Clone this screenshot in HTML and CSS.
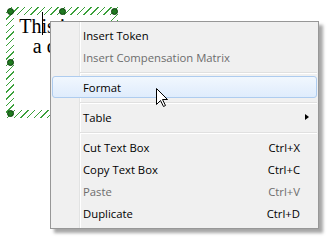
FILE: index.html
```html
<!DOCTYPE html>
<html>
<head>
<meta charset="utf-8">
<link rel="stylesheet" href="styles.css">
</head>
<body>
<div class="canvas">
  <div class="frame">
    <div class="textbox">
      <div class="line">Th<span class="caret"></span>is is our</div>
      <div class="line">a demo</div>
    </div>
    <span class="handle h-tl"></span>
    <span class="handle h-tm"></span>
    <span class="handle h-tr"></span>
    <span class="handle h-ml"></span>
    <span class="handle h-bl"></span>
  </div>

  <div class="menu">
    <div class="item">Insert Token</div>
    <div class="item disabled">Insert Compensation Matrix</div>
    <div class="sep"></div>
    <div class="item hover">Format</div>
    <div class="sep"></div>
    <div class="item">Table<span class="arrow"></span></div>
    <div class="sep"></div>
    <div class="item">Cut Text Box<span class="key">Ctrl+X</span></div>
    <div class="item">Copy Text Box<span class="key">Ctrl+C</span></div>
    <div class="item disabled">Paste<span class="key">Ctrl+V</span></div>
    <div class="item">Duplicate<span class="key">Ctrl+D</span></div>
  </div>

  <svg class="pointer" width="13" height="20" viewBox="0 0 13 20">
    <path d="M0.5 0.5 L0.5 16.5 L4.5 12.5 L7.5 18.5 L9.5 17.5 L6.5 11.5 L11.5 11.5 Z" fill="#fff" stroke="#000" stroke-width="1" stroke-linejoin="miter"/>
  </svg>
</div>
</body>
</html>
```

FILE: styles.css
```css
html, body {
  margin: 0;
  padding: 0;
  background: #fff;
}

.canvas {
  position: relative;
  width: 333px;
  height: 240px;
  overflow: hidden;
  background: #fff;
}

.frame {
  position: absolute;
  left: 6px;
  top: 7px;
  width: 112px;
  height: 111px;
  box-sizing: border-box;
  padding: 8px;
  background: repeating-linear-gradient(135deg, #fff 0 3.7px, #3aa03a 3.7px 4.7px);
}

.textbox {
  width: 100%;
  height: 100%;
  box-sizing: border-box;
  padding-top: 1px;
  background: #fff;
  font-family: "Liberation Serif", serif;
  font-size: 20px;
  line-height: 20px;
  text-align: center;
  color: #000;
}

.line {
  white-space: nowrap;
}

.caret {
  position: relative;
  display: inline-block;
  width: 0;
  height: 0;
}

.caret::after {
  content: "";
  position: absolute;
  left: 1px;
  top: -21px;
  width: 1px;
  height: 23px;
  background: #000;
}

.handle {
  position: absolute;
  width: 7px;
  height: 7px;
  box-sizing: border-box;
  border-radius: 50%;
  background: #1f7a1f;
  border: 1px solid #0b3d0b;
}

.h-tl { left: 1px; top: 1px; }
.h-tm { left: 53px; top: 1px; }
.h-tr { left: 105px; top: 1px; }
.h-ml { left: 1px; top: 52px; }
.h-bl { left: 1px; top: 103px; }

.menu {
  position: absolute;
  left: 50px;
  top: 21px;
  width: 269px;
  box-sizing: border-box;
  padding: 2px 1px 4px;
  border: 1px solid #979797;
  background:
    linear-gradient(to right, transparent 28px, #e2e3e3 28px 29px, #fff 29px 30px, transparent 30px),
    #f0f0f0;
  box-shadow: 4px 4px 3px rgba(0, 0, 0, 0.35);
  font-family: "Open Sans", sans-serif;
  font-size: 11.3px;
  color: #000;
}

.item {
  display: flex;
  align-items: center;
  height: 22px;
  box-sizing: border-box;
  padding: 0 17px 0 31px;
  white-space: nowrap;
}

.item.disabled {
  color: #6d6d6d;
}

.item.hover {
  border: 1px solid #aeccef;
  border-radius: 3px;
  padding-left: 30px;
  background: linear-gradient(to bottom, #f1f7fe, #dfecfc);
}

.key {
  margin-left: auto;
}

.arrow {
  margin-left: auto;
  margin-right: -9px;
  width: 0;
  height: 0;
  border-top: 3.5px solid transparent;
  border-bottom: 3.5px solid transparent;
  border-left: 4px solid #000;
}

.sep {
  height: 8px;
  box-sizing: border-box;
  margin-left: 28px;
  padding-top: 4px;
}

.sep::before {
  content: "";
  display: block;
  height: 1px;
  background: #e0e0e0;
  border-bottom: 1px solid #fff;
}

.pointer {
  position: absolute;
  left: 156px;
  top: 88px;
}
```
